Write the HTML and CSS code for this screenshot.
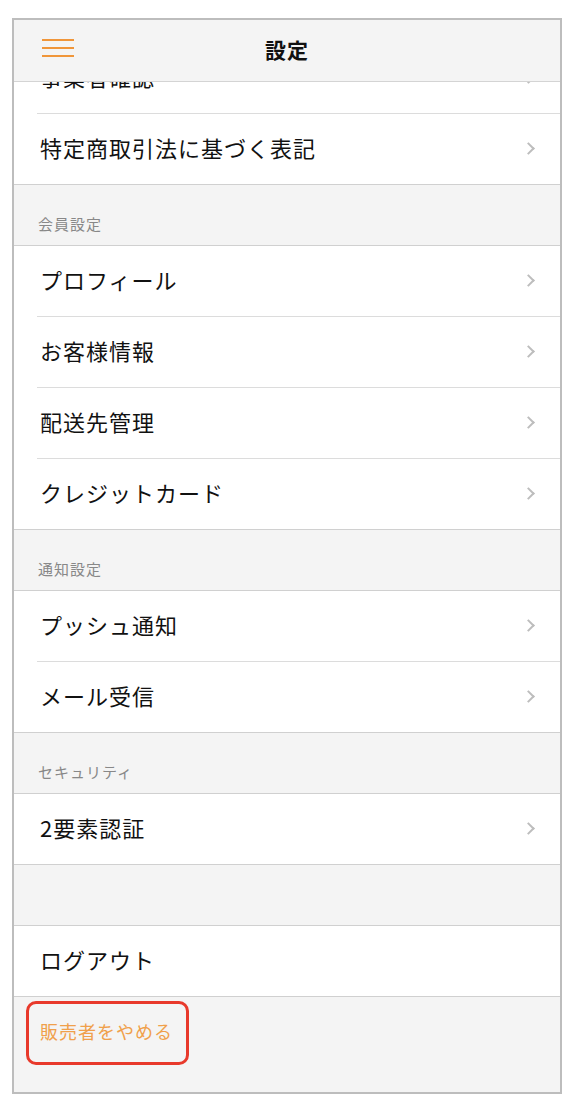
FILE: index.html
```html
<!DOCTYPE html>
<html lang="ja">
<head>
    <meta charset="UTF-8">
    <meta name="viewport" content="width=device-width, initial-scale=1.0">
    <title>設定</title>
    <link rel="stylesheet" href="styles.css">
</head>
<body>
    <div class="phone">
        <div class="topbar">
            <span class="menu-icon">
                <svg width="34" height="20" viewBox="0 0 34 20">
                    <rect x="1" y="1" width="32" height="2" fill="#f0963a"/>
                    <rect x="1" y="9" width="32" height="2" fill="#f0963a"/>
                    <rect x="1" y="17" width="32" height="2" fill="#f0963a"/>
                </svg>
            </span>
            <h1>設定</h1>
        </div>
        <div class="content">
            <div class="group first">
                <a href="#" class="row">事業者確認<span class="chevron"></span></a>
                <a href="#" class="row">特定商取引法に基づく表記<span class="chevron"></span></a>
            </div>

            <div class="section-title">会員設定</div>
            <div class="group">
                <a href="#" class="row">プロフィール<span class="chevron"></span></a>
                <a href="#" class="row">お客様情報<span class="chevron"></span></a>
                <a href="#" class="row">配送先管理<span class="chevron"></span></a>
                <a href="#" class="row">クレジットカード<span class="chevron"></span></a>
            </div>

            <div class="section-title">通知設定</div>
            <div class="group">
                <a href="#" class="row">プッシュ通知<span class="chevron"></span></a>
                <a href="#" class="row">メール受信<span class="chevron"></span></a>
            </div>

            <div class="section-title">セキュリティ</div>
            <div class="group">
                <a href="#" class="row">2要素認証<span class="chevron"></span></a>
            </div>

            <div class="section-title"></div>
            <div class="group">
                <a href="#" class="row">ログアウト</a>
            </div>

            <div class="footer">
                <a href="#" class="quit-link">販売者をやめる</a>
            </div>
        </div>
    </div>
</body>
</html>
```

FILE: styles.css
```css
* {
    box-sizing: border-box;
}
body {
    font-family: "Noto Sans CJK JP", "Noto Sans", sans-serif;
    margin: 0;
    padding: 0;
    background-color: #ffffff;
}
.phone {
    width: 550px;
    height: 1076px;
    margin: 18px 0 0 12px;
    border: 2px solid #bdbdbd;
    background-color: #f4f4f4;
    display: flex;
    flex-direction: column;
    overflow: hidden;
}
.topbar {
    height: 62px;
    flex-shrink: 0;
    display: flex;
    align-items: center;
    justify-content: center;
    padding-bottom: 4px;
    border-bottom: 1px solid #d4d4d4;
    background-color: #f4f4f4;
    position: relative;
    z-index: 1;
}
.topbar h1 {
    margin: 0;
    font-size: 21px;
    font-weight: bold;
    color: #111;
    letter-spacing: 1px;
}
.menu-icon {
    position: absolute;
    left: 27px;
    top: 18px;
    line-height: 0;
}
.content {
    flex: 1;
    overflow: hidden;
}
.group {
    background-color: #fff;
    border-bottom: 1px solid #d0d0d0;
}
.group.first {
    margin-top: -39px;
}
.row {
    display: flex;
    align-items: center;
    justify-content: space-between;
    height: 71px;
    margin-left: 23px;
    padding: 0 25px 5px 3px;
    border-bottom: 1px solid #dcdcdc;
    font-size: 22px;
    letter-spacing: 1px;
    color: #111;
    text-decoration: none;
}
.row:last-child {
    border-bottom: none;
    height: 70px;
}
.chevron {
    width: 9px;
    height: 9px;
    margin-top: 4px;
    border-top: 2px solid #bdbdbd;
    border-right: 2px solid #bdbdbd;
    transform: rotate(45deg);
    margin-right: 2px;
}
.section-title {
    height: 61px;
    display: flex;
    align-items: flex-end;
    padding: 0 0 11px 24px;
    font-size: 15px;
    letter-spacing: 1px;
    color: #888;
    border-bottom: 1px solid #d0d0d0;
}
.footer {
    padding: 4px 0 0 12px;
}
.quit-link {
    display: flex;
    align-items: center;
    width: 163px;
    height: 64px;
    padding: 0 0 4px 11px;
    border: 3px solid #e8392b;
    border-radius: 10px;
    font-size: 18px;
    letter-spacing: 1px;
    color: #f0a04b;
    text-decoration: none;
}
```
